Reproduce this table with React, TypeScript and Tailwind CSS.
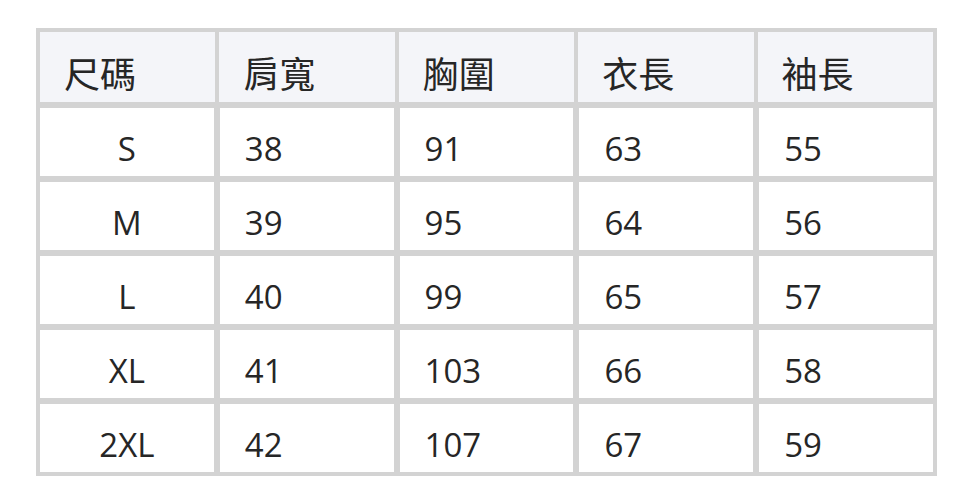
const headers = ['尺碼', '肩寬', '胸圍', '衣長', '袖長']

const rows = [
  ['S', '38', '91', '63', '55'],
  ['M', '39', '95', '64', '56'],
  ['L', '40', '99', '65', '57'],
  ['XL', '41', '103', '66', '58'],
  ['2XL', '42', '107', '67', '59'],
]

export default function App() {
  return (
    <div
      className="w-[972px] h-[503px] bg-white pl-[36px] pt-[28px] text-[#262626]"
      style={{ fontFamily: '"Open Sans", "Noto Sans", "Noto Sans CJK TC", sans-serif' }}
    >
      <div className="w-[901px] bg-[#d3d3d3] p-[4px] flex flex-col gap-[6px]">
        {/* Header */}
        <div className="grid grid-cols-5 gap-x-[4px] h-[70px]">
          {headers.map((h) => (
            <div key={h} className="bg-[#f4f5f9] flex items-center pl-[24px] pt-[16px] text-[36px] leading-none">
              {h}
            </div>
          ))}
        </div>

        {/* Body rows */}
        {rows.map((r) => (
          <div key={r[0]} className="grid grid-cols-5 gap-x-[6px] h-[68px]">
            {r.map((v, i) => (
              <div
                key={i}
                className={
                  i === 0
                    ? 'bg-white flex items-center justify-center pt-[12px] text-[33px] leading-none'
                    : 'bg-white flex items-center pl-[25px] pt-[12px] text-[33px] leading-none'
                }
              >
                {v}
              </div>
            ))}
          </div>
        ))}
      </div>
    </div>
  )
}
